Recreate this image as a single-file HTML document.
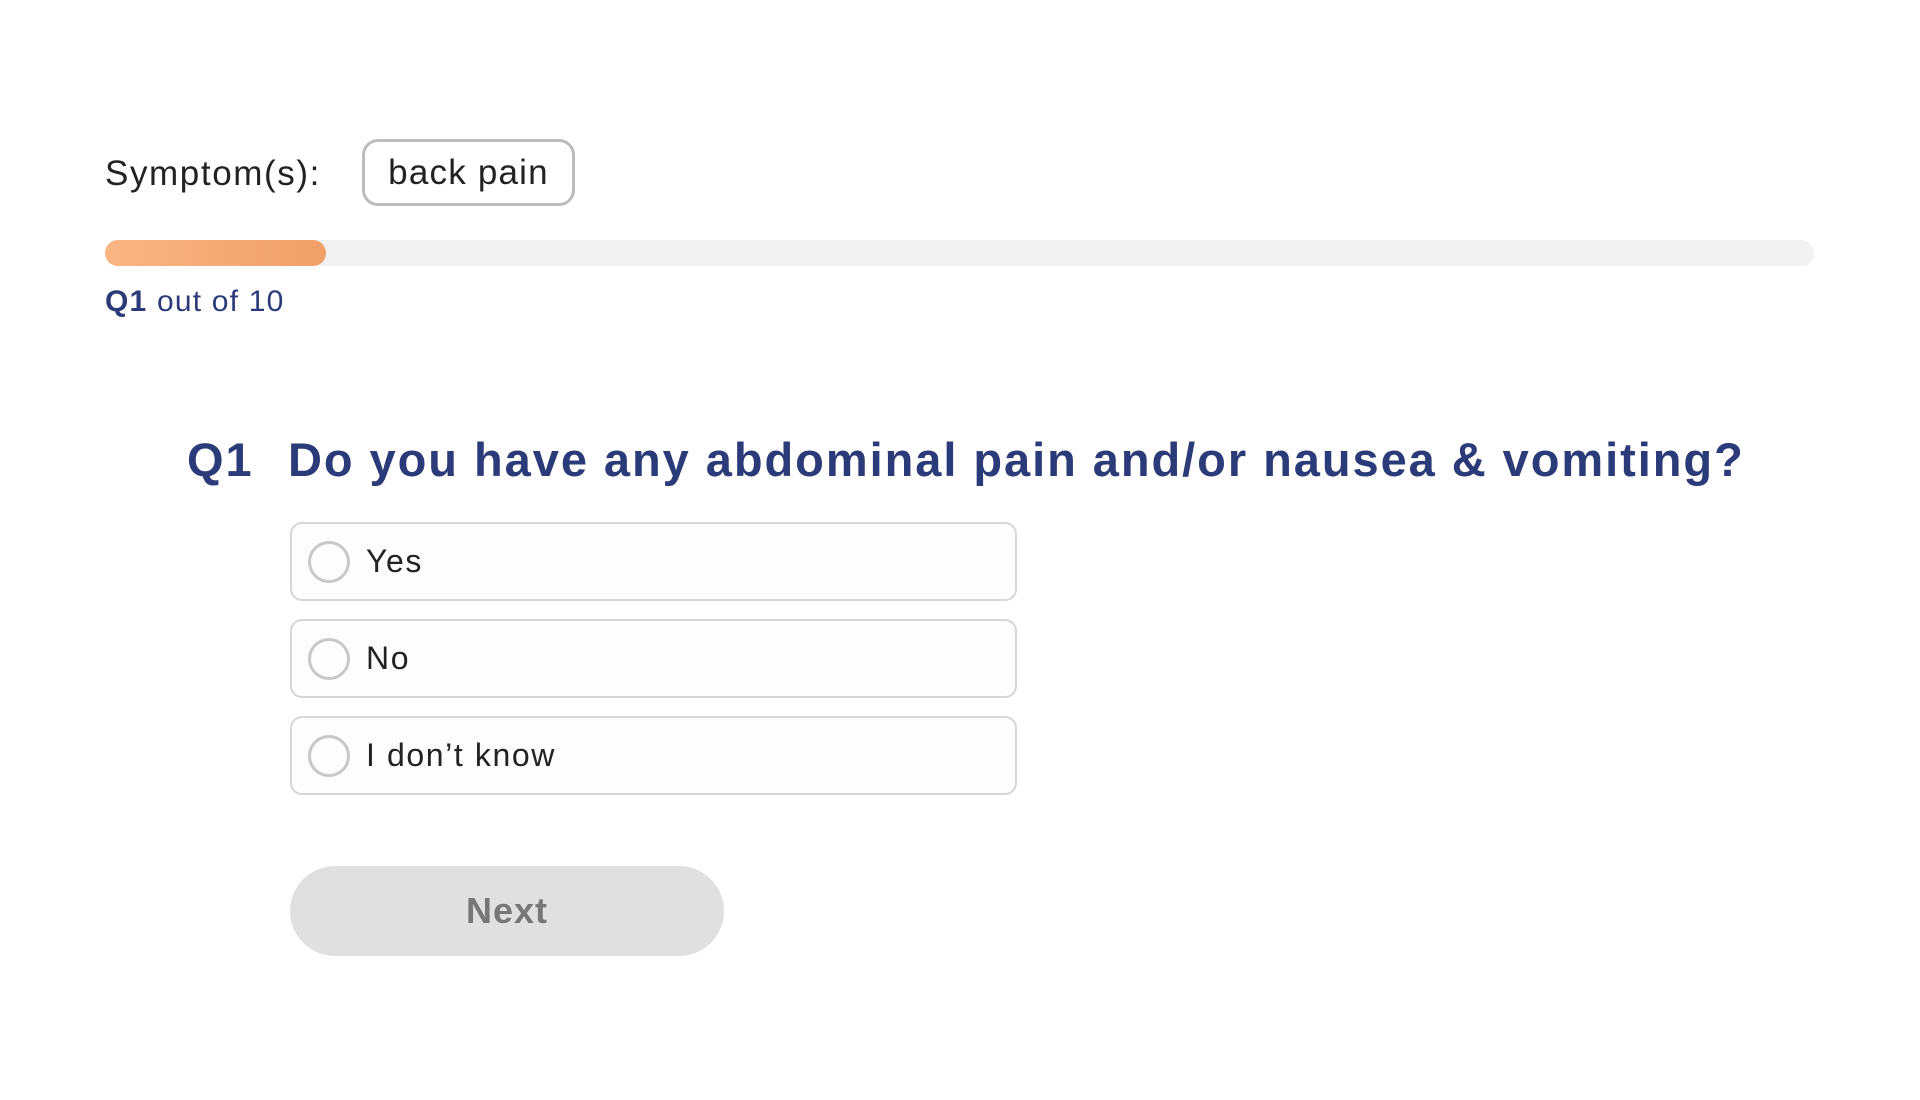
<!DOCTYPE html>
<html><head><meta charset="utf-8"><style>
*{box-sizing:border-box;margin:0;padding:0}
body{width:1920px;height:1100px;background:#fff;font-family:"Liberation Sans",sans-serif;position:relative;overflow:hidden}
.abs{position:absolute}
.sym{left:105px;top:152px;font-size:35px;color:#222;line-height:44px;letter-spacing:1.6px}
.tag{left:362px;top:139px;width:213px;height:67px;border:3px solid #bdbdbd;border-radius:16px;font-size:35px;color:#222;display:flex;align-items:center;justify-content:center;letter-spacing:1.2px}
.bar{left:105px;top:240px;width:1709px;height:26px;background:#f2f2f2;border-radius:13px}
.fill{left:105px;top:240px;width:221px;height:26px;border-radius:13px;background:linear-gradient(90deg,#f9b583,#f0a068)}
.cnt{left:105px;top:283px;font-size:30px;color:#2b3a78;line-height:38px;letter-spacing:1.2px}
.q{top:431px;font-size:47px;font-weight:bold;color:#2b3a78;line-height:58px;letter-spacing:1.95px}
.opt{left:290px;width:727px;height:79px;border:2px solid #d6d6d6;border-radius:12px;background:#fdfdfd;display:flex;align-items:center}
.opt .c{width:42px;height:42px;border:3px solid #c8c8c8;border-radius:50%;margin-left:16px;margin-right:16px}
.opt span{font-size:32px;color:#222;letter-spacing:1.6px}
.btn{left:290px;top:866px;width:434px;height:90px;border-radius:45px;background:#e0e0e0;color:#777;font-size:36px;font-weight:bold;display:flex;align-items:center;justify-content:center;letter-spacing:1px}
</style></head><body>
<div class="abs sym">Symptom(s):</div>
<div class="abs tag">back pain</div>
<div class="abs bar"></div>
<div class="abs fill"></div>
<div class="abs cnt"><b>Q1</b> out of 10</div>
<div class="abs q" style="left:187px">Q1</div>
<div class="abs q" style="left:288px">Do you have any abdominal pain and/or nausea &amp; vomiting?</div>
<div class="abs opt" style="top:522px"><div class="c"></div><span>Yes</span></div>
<div class="abs opt" style="top:619px"><div class="c"></div><span>No</span></div>
<div class="abs opt" style="top:716px"><div class="c"></div><span>I don’t know</span></div>
<div class="abs btn">Next</div>
</body></html>
